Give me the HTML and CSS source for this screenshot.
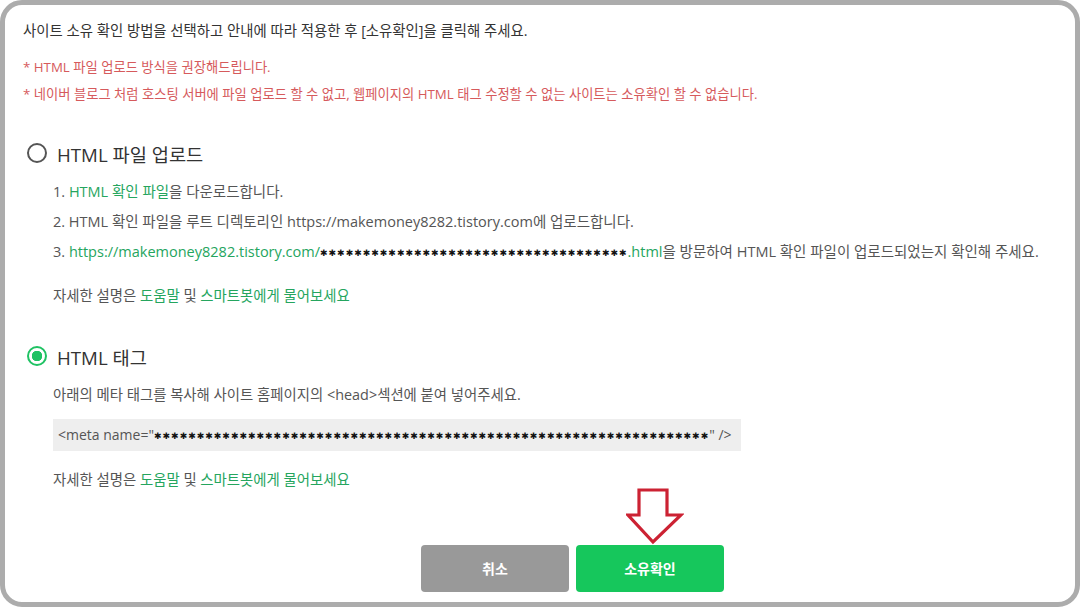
FILE: index.html
```html
<!DOCTYPE html>
<html lang="ko">
    <head>
        <meta charset="utf-8">
        <title>사이트 소유 확인</title>
        <link rel="stylesheet" href="styles.css">
    </head>
    <body>
        <div class="frame">
            <p class="intro">사이트 소유 확인 방법을 선택하고 안내에 따라 적용한 후 [소유확인]을 클릭해 주세요.</p>
            <ul class="notes">
                <li>* HTML 파일 업로드 방식을 권장해드립니다.</li>
                <li>* 네이버 블로그 처럼 호스팅 서버에 파일 업로드 할 수 없고, 웹페이지의 HTML 태그 수정할 수 없는 사이트는 소유확인 할 수 없습니다.</li>
            </ul>

            <div class="option">
                <span class="radio"></span>
                <span class="option-title">HTML 파일 업로드</span>
            </div>
            <ol class="steps">
                <li>1. <span class="link">HTML 확인 파일</span>을 다운로드합니다.</li>
                <li>2. HTML 확인 파일을 루트 디렉토리인 https://makemoney8282.tistory.com에 업로드합니다.</li>
                <li>3. <span class="link">https://makemoney8282.tistory.com/<span class="mask">✱✱✱✱✱✱✱✱✱✱✱✱✱✱✱✱✱✱✱✱✱✱✱✱✱✱✱✱✱✱✱✱✱✱✱✱</span>.html</span>을 방문하여 HTML 확인 파일이 업로드되었는지 확인해 주세요.</li>
            </ol>
            <p class="help">자세한 설명은 <span class="link">도움말</span> 및 <span class="link">스마트봇에게 물어보세요</span></p>

            <div class="option option-second">
                <span class="radio checked"></span>
                <span class="option-title">HTML 태그</span>
            </div>
            <p class="desc">아래의 메타 태그를 복사해 사이트 홈페이지의 &lt;head&gt;섹션에 붙여 넣어주세요.</p>
            <div class="meta-box">&lt;meta name="<span class="mask">✱✱✱✱✱✱✱✱✱✱✱✱✱✱✱✱✱✱✱✱✱✱✱✱✱✱✱✱✱✱✱✱✱✱✱✱✱✱✱✱✱✱✱✱✱✱✱✱✱✱✱✱✱✱✱✱✱✱✱✱✱✱✱✱✱</span>" /&gt;</div>
            <p class="help">자세한 설명은 <span class="link">도움말</span> 및 <span class="link">스마트봇에게 물어보세요</span></p>

            <div class="actions">
                <div class="button cancel">취소</div>
                <div class="button confirm">
                    <svg class="arrow" width="58" height="57" viewBox="0 0 58 57">
                        <path d="M13 2 H41 V27 H55 L27 54 L2 27 H13 Z" fill="#fff" stroke="#cc2233" stroke-width="3.2" stroke-linejoin="miter"/>
                    </svg>
                    소유확인
                </div>
            </div>
        </div>
    </body>
</html>
```

FILE: styles.css
```css
body {
    margin: 0;
    background: #fff;
    font-family: "Open Sans", "Noto Sans CJK KR", sans-serif;
    color: #555;
}
.frame {
    box-sizing: border-box;
    height: 607px;
    border: 5px solid #acacac;
    border-radius: 22px;
    padding: 0 18px;
    overflow: hidden;
}
p, ul, ol {
    margin: 0;
    padding: 0;
    list-style: none;
}
.intro {
    margin-top: 16px;
    font-size: 14.4px;
    line-height: 20px;
    color: #333;
}
.notes {
    margin-top: 13px;
    font-size: 13.3px;
    line-height: 27px;
    color: #d65a5c;
}
.option {
    margin-top: 33px;
    display: flex;
    align-items: center;
    height: 24px;
    padding-left: 4px;
}
.option-second {
    margin-top: 38px;
}
.radio {
    box-sizing: border-box;
    width: 20px;
    height: 20px;
    border: 2px solid #555;
    border-radius: 50%;
    margin-right: 10px;
}
.radio.checked {
    border: 2px solid #1fc263;
    background: radial-gradient(circle, #1fc263 0 5px, #fff 5.5px);
}
.option-title {
    font-size: 18.7px;
    color: #333;
}
.steps {
    margin-top: 12px;
    padding-left: 30px;
    font-size: 14.5px;
    line-height: 30px;
}
.link {
    color: #25a55e;
}
.mask {
    font-family: "DejaVu Sans", sans-serif;
    font-size: 9px;
    color: #111;
    letter-spacing: 1px;
    vertical-align: 1px;
}
.help {
    margin-top: 18px;
    padding-left: 30px;
    font-size: 14.4px;
    line-height: 20px;
}
.desc {
    margin-top: 17px;
    padding-left: 30px;
    font-size: 14.4px;
    line-height: 20px;
}
.meta-box {
    margin: 14px 0 19px 30px;
    width: 688px;
    box-sizing: border-box;
    height: 32px;
    line-height: 32px;
    padding-left: 5px;
    background: #eee;
    font-size: 14px;
    white-space: nowrap;
    overflow: hidden;
}
.meta-box + .help {
    margin-top: 19px;
}
.actions {
    margin-top: 55px;
    padding-left: 398px;
    display: flex;
    gap: 7px;
}
.button {
    position: relative;
    width: 148px;
    height: 47px;
    line-height: 47px;
    border-radius: 4px;
    text-align: center;
    color: #fff;
    font-size: 14px;
    font-weight: bold;
}
.cancel {
    background: #999;
}
.confirm {
    background: #16c75c;
}
.arrow {
    position: absolute;
    left: 50px;
    top: -57px;
}
```
